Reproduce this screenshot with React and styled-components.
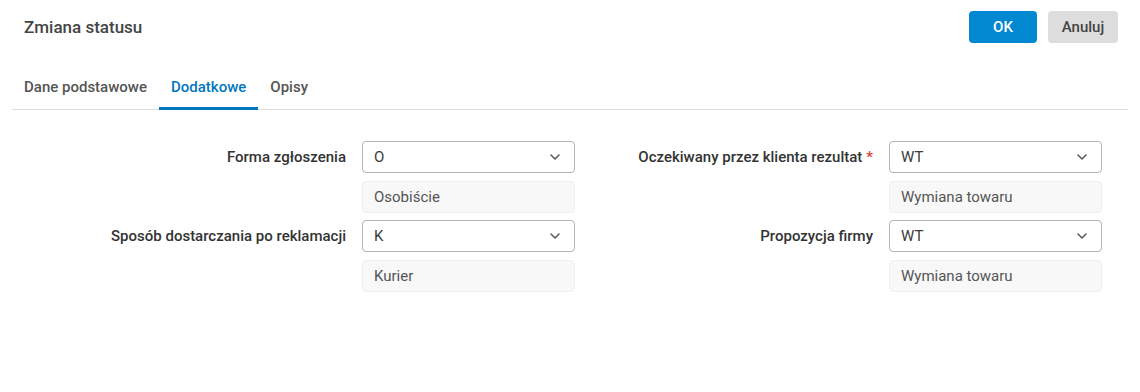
import React from 'react'
import styled, {createGlobalStyle} from 'styled-components'

const GlobalStyle = createGlobalStyle`
  html, body {
    margin: 0;
    padding: 0;
    background: #fff;
    font-family: Roboto, "Noto Sans", sans-serif;
  }
  * { box-sizing: border-box; }
`

const Page = styled.div`
  width: 1140px;
  height: 392px;
  background: #fff;
`

const Header = styled.div`
  display: flex;
  align-items: center;
  justify-content: space-between;
  height: 54px;
  padding: 0 22px 0 24px;
`

const Title = styled.h1`
  margin: 0;
  font-size: 17px;
  font-weight: 500;
  color: #444;
`

const Actions = styled.div`
  display: flex;
  gap: 11px;
`

const Button = styled.button`
  height: 32px;
  min-width: ${p => p.$w}px;
  padding: 0 12px;
  border: none;
  border-radius: 4px;
  font-family: Roboto, sans-serif;
  font-size: 15px;
  font-weight: 500;
  cursor: pointer;
  background: ${p => (p.$primary ? '#0288d1' : '#dddddd')};
  color: ${p => (p.$primary ? '#fff' : '#444')};
`

const Tabs = styled.div`
  display: flex;
  margin: 13px 12px 0 12px;
  border-bottom: 1px solid #dcdcdc;
`

const Tab = styled.div`
  padding: 0 12px;
  height: 43px;
  line-height: 41px;
  font-size: 15px;
  font-weight: 500;
  color: ${p => (p.$active ? '#0277bd' : '#555')};
  border-bottom: 3px solid ${p => (p.$active ? '#0277bd' : 'transparent')};
  margin-bottom: -1px;
  cursor: pointer;
`

const Form = styled.div`
  display: grid;
  grid-template-columns: 1fr 213px 1fr 213px;
  grid-auto-rows: 32px;
  column-gap: 16px;
  row-gap: 7.5px;
  padding: 31px 38px 0 64px;
`

const Label = styled.label`
  display: flex;
  align-items: center;
  justify-content: flex-end;
  font-size: 15px;
  font-weight: 500;
  color: #333;
  white-space: nowrap;
`

const Required = styled.span`
  color: #e53935;
  margin-left: 4px;
`

const Select = styled.div`
  display: flex;
  align-items: center;
  justify-content: space-between;
  height: 32px;
  padding: 0 14px 0 11px;
  border: 1px solid #b5b5b5;
  border-radius: 4px;
  background: #fff;
  font-size: 15px;
  color: #3a3a3a;
`

const ReadOnly = styled.div`
  display: flex;
  align-items: center;
  height: 32px;
  padding: 0 11px;
  border: 1px solid #efefef;
  border-radius: 4px;
  background: #f8f8f8;
  font-size: 15px;
  color: #555;
`

const Empty = styled.div``

const Chevron = () => (
  <svg width="10" height="6" viewBox="0 0 10 6" fill="none">
    <path d="M1 1l4 4 4-4" stroke="#555" strokeWidth="1.5" strokeLinecap="round" strokeLinejoin="round" />
  </svg>
)

const Field = ({value}) => (
  <Select>
    <span>{value}</span>
    <Chevron />
  </Select>
)

export default function App() {
  return (
    <Page>
      <GlobalStyle />
      <Header>
        <Title>Zmiana statusu</Title>
        <Actions>
          <Button $primary $w={68}>OK</Button>
          <Button $w={70}>Anuluj</Button>
        </Actions>
      </Header>
      <Tabs>
        <Tab>Dane podstawowe</Tab>
        <Tab $active>Dodatkowe</Tab>
        <Tab>Opisy</Tab>
      </Tabs>
      <Form>
        <Label>Forma zgłoszenia</Label>
        <Field value="O" />
        <Label>Oczekiwany przez klienta rezultat<Required>*</Required></Label>
        <Field value="WT" />

        <Empty />
        <ReadOnly>Osobiście</ReadOnly>
        <Empty />
        <ReadOnly>Wymiana towaru</ReadOnly>

        <Label>Sposób dostarczania po reklamacji</Label>
        <Field value="K" />
        <Label>Propozycja firmy</Label>
        <Field value="WT" />

        <Empty />
        <ReadOnly>Kurier</ReadOnly>
        <Empty />
        <ReadOnly>Wymiana towaru</ReadOnly>
      </Form>
    </Page>
  )
}
